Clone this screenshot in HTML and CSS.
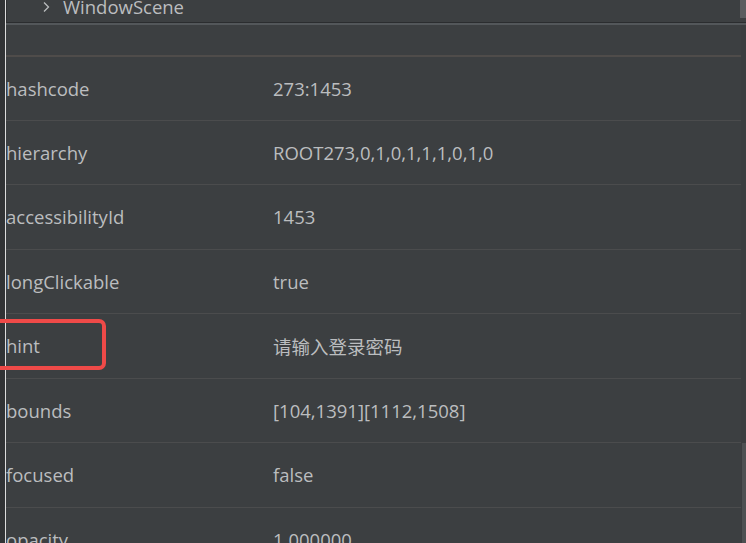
FILE: index.html
```html
<!DOCTYPE html>
<html>
<head>
<meta charset="utf-8">
<link rel="stylesheet" href="styles.css">
</head>
<body>
<div class="app">
  <div class="edge"></div>
  <div class="divider"></div>
  <div class="main">
    <div class="tree">
      <div class="tree-row">
        <svg class="chev" width="9" height="12" viewBox="0 0 9 12"><path d="M2 1.5 L6.5 6 L2 10.5" fill="none" stroke="#b9bcbe" stroke-width="1.3"/></svg>
        <span class="tree-label">WindowScene</span>
      </div>
      <div class="tree-scroll"><div class="tree-thumb"></div></div>
    </div>
    <div class="sep"></div>
    <div class="props">
      <div class="table">
        <div class="lead"></div>
        <div class="row first"><span class="key">hashcode</span><span class="val">273:1453</span></div>
        <div class="row"><span class="key">hierarchy</span><span class="val">ROOT273,0,1,0,1,1,1,0,1,0</span></div>
        <div class="row"><span class="key">accessibilityId</span><span class="val">1453</span></div>
        <div class="row"><span class="key">longClickable</span><span class="val">true</span></div>
        <div class="row"><span class="key highlighted">hint</span><span class="val">请输入登录密码</span></div>
        <div class="row"><span class="key">bounds</span><span class="val">[104,1391][1112,1508]</span></div>
        <div class="row"><span class="key">focused</span><span class="val">false</span></div>
        <div class="row"><span class="key">opacity</span><span class="val">1.000000</span></div>
      </div>
      <div class="vscroll"><div class="vthumb"></div></div>
    </div>
  </div>
</div>
</body>
</html>
```
FILE: styles.css
```css
html, body {
  margin: 0;
  padding: 0;
  background: #3c3f41;
  overflow: hidden;
}
.app {
  display: flex;
  width: 746px;
  height: 543px;
  overflow: hidden;
  font-family: "Open Sans", "Noto Sans CJK SC", sans-serif;
  color: #bbbdbf;
}
.edge {
  width: 5px;
  background: #313335;
  flex: none;
}
.divider {
  width: 1px;
  background: #dcdcdc;
  flex: none;
}
.main {
  flex: 1;
  display: flex;
  flex-direction: column;
  min-width: 0;
}
.tree {
  height: 22px;
  display: flex;
  border-left: 1px solid #2f3133;
  border-bottom: 1px solid #2b2d2f;
  overflow: hidden;
  flex: none;
}
.tree-row {
  flex: 1;
  display: flex;
  align-items: flex-end;
  height: 22px;
}
.chev {
  margin-left: 35px;
  margin-bottom: 9px;
}
.tree-label {
  margin-left: 12px;
  font-size: 18.5px;
  line-height: 18px;
  margin-bottom: 6px;
}
.tree-scroll {
  width: 6px;
  flex: none;
}
.tree-thumb {
  height: 18px;
  background: #5a5d5f;
}
.sep {
  height: 2px;
  background: #53575a;
  flex: none;
}
.props {
  flex: 1;
  display: flex;
  min-height: 0;
}
.table {
  flex: 1;
  display: flex;
  flex-direction: column;
}
.lead {
  height: 30px;
  flex: none;
}
.row {
  height: 63.5px;
  border-top: 1px solid #4b4c4d;
  display: flex;
  align-items: center;
  font-size: 18.5px;
  flex: none;
}
.row.first {
  border-top: 2px solid #4f4c4a;
  height: 62.5px;
}
.key {
  width: 267px;
  flex: none;
  position: relative;
}
.val {
  flex: 1;
}
.highlighted::after {
  content: "";
  position: absolute;
  left: -20px;
  top: -14px;
  width: 112px;
  height: 43px;
  border: 4px solid #ef4a48;
  border-radius: 7px;
}
.vscroll {
  width: 5px;
  flex: none;
  background: #3a3d3f;
  display: flex;
  flex-direction: column;
  justify-content: flex-end;
}
.vthumb {
  height: 100px;
  margin-left: 1px;
  background: #4d5052;
}
```
